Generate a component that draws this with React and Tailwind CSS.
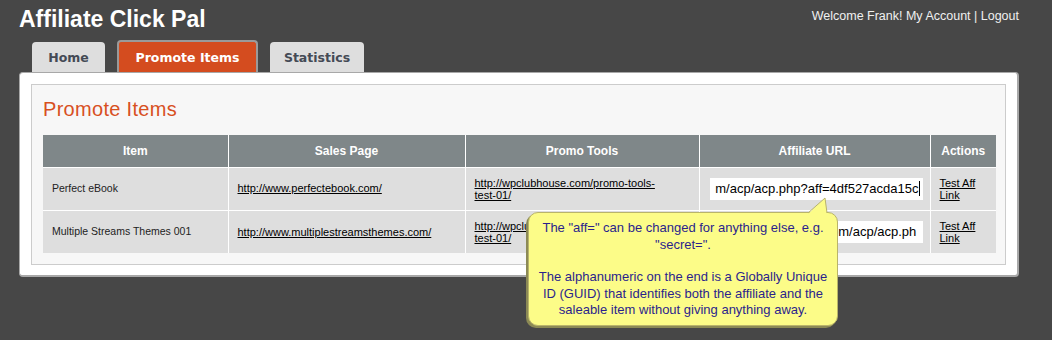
import React from "react";

const rows = [
  {
    item: "Perfect eBook",
    sales: "http://www.perfectebook.com/",
    promo: ["http://wpclubhouse.com/promo-tools-", "test-01/"],
    url: "m/acp/acp.php?aff=4df527acda15c",
    focused: true,
  },
  {
    item: "Multiple Streams Themes 001",
    sales: "http://www.multiplestreamsthemes.com/",
    promo: ["http://wpclubhouse.com/promo-tools-", "test-01/"],
    url: "http://wpclubhouse.com/acp/acp.ph",
    focused: false,
  },
];

const Tab = ({ label, active }) =>
  active ? (
    <div className="h-[32px] w-[141px] rounded-t-[4px] border-2 border-b-0 border-[#9a9a9a] bg-[#d44c1f] flex items-center justify-center pt-[2px] text-[12.5px] font-bold text-white font-['DejaVu_Sans',sans-serif]">
      {label}
    </div>
  ) : (
    <div className="h-[30px] rounded-t-[4px] bg-[#dedede] flex items-center justify-center pt-[3px] text-[12.5px] font-bold text-[#444a55] font-['DejaVu_Sans',sans-serif]">
      {label}
    </div>
  );

export default function App() {
  return (
    <div className="relative w-[1052px] h-[340px] overflow-hidden bg-[#474747] font-['Liberation_Sans',Arial,sans-serif]">
      {/* top bar */}
      <div className="flex justify-between pl-[19px] pr-[33px] pt-[5px] h-[40px]">
        <h1 className="text-[23px] font-bold text-white leading-[28px]">Affiliate Click Pal</h1>
        <div className="text-[12.5px] text-[#f0f0f0] pt-[2px]">
          Welcome Frank! My Account | Logout
        </div>
      </div>

      {/* tabs */}
      <div className="flex items-end gap-[12px] pl-[32px]">
        <div className="w-[73px]">
          <Tab label="Home" />
        </div>
        <Tab label="Promote Items" active />
        <div className="w-[94px]">
          <Tab label="Statistics" />
        </div>
      </div>

      {/* panel */}
      <div className="ml-[19px] w-[1000px] rounded-[4px] border border-r-2 border-b-2 border-[#a8a8a8] bg-white pt-[11px] pb-[10px] px-[11px]">
        <div className="border border-[#cccccc] bg-[#f7f7f7] pl-[11px] pr-[10px] pt-[12px] pb-[11px]">
          <h2 className="text-[20px] text-[#d8501f] leading-[24px] mb-[14px] tracking-[0.3px]">Promote Items</h2>
          <table className="w-[953px] border-collapse text-[11px] text-[#222]">
            <thead>
              <tr className="bg-[#7f8789] text-white text-[12px] font-bold h-[32px]">
                <th className="w-[185px] border-r border-white font-bold">Item</th>
                <th className="w-[237px] border-r border-white font-bold">Sales Page</th>
                <th className="w-[234px] border-r border-white font-bold">Promo Tools</th>
                <th className="w-[231px] border-r border-white font-bold">Affiliate URL</th>
                <th className="font-bold">Actions</th>
              </tr>
            </thead>
            <tbody>
              {rows.map((r, i) => (
                <tr key={i} className="bg-[#dedede] h-[43px] border-t border-white">
                  <td className="pl-[9px] border-r border-white text-[10.5px]">{r.item}</td>
                  <td className="pl-[9px] border-r border-white">
                    <a className="underline text-black">{r.sales}</a>
                  </td>
                  <td className="pl-[9px] border-r border-white leading-[12px]">
                    <a className="underline text-black block">{r.promo[0]}</a>
                    <a className="underline text-black block">{r.promo[1]}</a>
                  </td>
                  <td className="pl-[10px] pr-[7px] border-r border-white">
                    <div
                      className={
                        r.focused
                          ? "h-[22px] bg-white flex items-center justify-end overflow-hidden whitespace-nowrap pr-[3px] text-[13px] text-black"
                          : "h-[22px] bg-white flex items-center overflow-hidden whitespace-nowrap pl-[3px] text-[13px] text-black"
                      }
                    >
                      {r.url}
                      {r.focused && <span className="w-px h-[15px] bg-black" />}
                    </div>
                  </td>
                  <td className="pl-[9px] leading-[12px]">
                    <a className="underline text-black block">Test Aff</a>
                    <a className="underline text-black block">Link</a>
                  </td>
                </tr>
              ))}
            </tbody>
          </table>
        </div>
      </div>

      {/* tooltip */}
      <div className="absolute left-[528px] top-[212px] w-[310px] h-[114px] rounded-[10px] border border-[#b9b46a] bg-[#fcfc88] shadow-[-2px_2px_0_#8c8a55] text-center text-[13px] leading-[16.5px] text-[#2b1f8c] pt-[7px]">
        <p>The "aff=" can be changed for anything else, e.g.</p>
        <p>"secret=".</p>
        <p className="mt-[16px]">The alphanumeric on the end is a Globally Unique</p>
        <p>ID (GUID) that identifies both the affiliate and the</p>
        <p>saleable item without giving anything away.</p>
      </div>
      <svg className="absolute left-[806px] top-[197px]" width="26" height="17" viewBox="0 0 26 17">
        <polygon points="2,17 19,1 21,17" fill="#fcfc88" />
        <polyline points="2,16 19,1 21,16" fill="none" stroke="#b9b46a" strokeWidth="1" />
      </svg>
    </div>
  );
}
